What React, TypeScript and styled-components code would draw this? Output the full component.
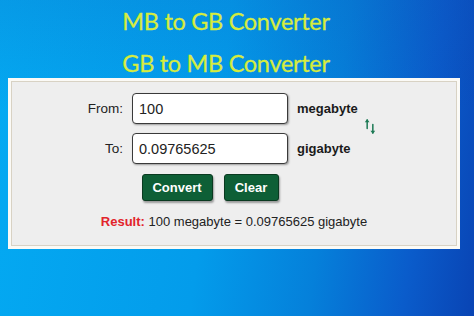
import styled, { createGlobalStyle } from 'styled-components';

const GlobalStyle = createGlobalStyle`
    html, body {
        margin: 0;
        padding: 0;
    }
    body {
        width: 474px;
        height: 316px;
        overflow: hidden;
    }
`;

const Page = styled.div`
    width: 474px;
    height: 316px;
    box-sizing: border-box;
    padding: 0 14px 0 8px;
    background:
        linear-gradient(180deg, rgba(20, 60, 160, 0.14) 0%, rgba(20, 60, 160, 0) 35%),
        linear-gradient(98deg, #04aaf2 0%, #039ceb 45%, #0580da 68%, #0a5ccb 86%, #0944b4 100%);
    font-family: 'Liberation Sans', Arial, sans-serif;
`;

const Titles = styled.div`
    height: 78px;
    display: flex;
    flex-direction: column;
    align-items: center;
    padding-right: 16px;
`;

const Title = styled.div`
    font-family: Lato, 'Open Sans', sans-serif;
    font-size: 23.5px;
    line-height: 42px;
    letter-spacing: -0.3px;
    color: #d6ec3e;
    -webkit-text-stroke: 0.3px #d6ec3e;
`;

const Frame = styled.div`
    padding: 3px;
    background: #fbfaf6;
`;

const Panel = styled.div`
    border: 1px solid #d8d2c4;
    background: #eeeeee;
    padding: 11px 0 16px;
`;

const Form = styled.div`
    display: grid;
    grid-template-columns: 111px 156px 58px auto;
    column-gap: 9px;
    row-gap: 9px;
    align-items: center;
`;

const Label = styled.label`
    justify-self: end;
    font-size: 13.5px;
    color: #222;
`;

const Field = styled.input`
    box-sizing: border-box;
    width: 156px;
    height: 31px;
    padding: 0 6px;
    border: 1.5px solid #3a3a3a;
    border-radius: 4px;
    background: #fff;
    box-shadow: 1px 1px 2px rgba(0, 0, 0, 0.35);
    font-family: 'Liberation Sans', Arial, sans-serif;
    font-size: 14.5px;
    color: #222;
    outline: none;
`;

const Unit = styled.span`
    font-size: 13px;
    font-weight: bold;
    color: #1a1a1a;
    white-space: nowrap;
`;

const Swap = styled.div`
    grid-column: 4;
    grid-row: 1 / span 2;
    align-self: start;
    display: flex;
    padding-top: 25px;
`;

const Buttons = styled.div`
    grid-column: 2;
    display: flex;
    justify-content: center;
    gap: 11px;
    margin-top: 1px;
`;

const Button = styled.button<{ $w: number }>`
    width: ${(p) => p.$w}px;
    height: 27px;
    padding: 0;
    border: 1px solid #0a3a20;
    border-radius: 3px;
    background: #0e5f36;
    box-shadow: 1px 2px 2px rgba(0, 0, 0, 0.35);
    color: #fff;
    font-family: 'Liberation Sans', Arial, sans-serif;
    font-size: 13px;
    font-weight: bold;
`;

const Result = styled.div`
    margin-top: 13px;
    text-align: center;
    font-size: 13px;
    color: #222;
`;

const ResultLabel = styled.span`
    color: #e2242b;
    font-weight: bold;
`;

const SwapIcon = () => (
    <svg width="12" height="17" viewBox="0 0 12 18">
        <g stroke="#1d7a55" strokeWidth="1.6" fill="none" strokeLinecap="round">
            <path d="M3 11 V2" />
            <path d="M9 7 V16" />
        </g>
        <path d="M0.5 4.5 L3 1 L5.5 4.5 Z" fill="#1d7a55" />
        <path d="M6.5 13.5 L9 17 L11.5 13.5 Z" fill="#1d7a55" />
    </svg>
);

const App = () => {
    return (
        <Page>
            <GlobalStyle />
            <Titles>
                <Title>MB to GB Converter</Title>
                <Title>GB to MB Converter</Title>
            </Titles>
            <Frame>
                <Panel>
                    <Form>
                        <Label>From:</Label>
                        <Field defaultValue="100" />
                        <Unit>megabyte</Unit>
                        <Swap>
                            <SwapIcon />
                        </Swap>
                        <Label>To:</Label>
                        <Field defaultValue="0.09765625" />
                        <Unit>gigabyte</Unit>
                        <Buttons>
                            <Button $w={71}>Convert</Button>
                            <Button $w={55}>Clear</Button>
                        </Buttons>
                    </Form>
                    <Result>
                        <ResultLabel>Result:</ResultLabel> 100 megabyte = 0.09765625 gigabyte
                    </Result>
                </Panel>
            </Frame>
        </Page>
    );
};

export default App;
